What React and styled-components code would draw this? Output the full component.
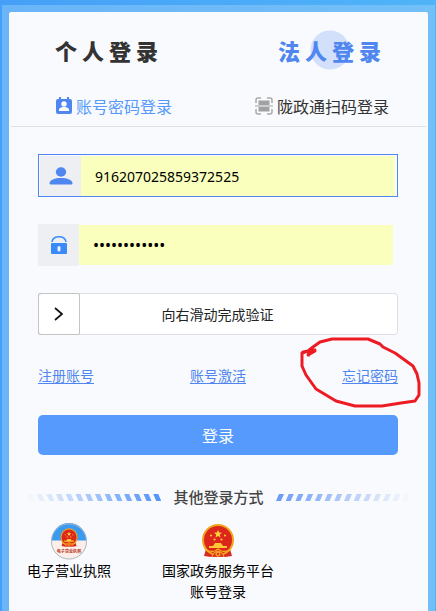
import React, {useState} from 'react';
import styled, {createGlobalStyle} from 'styled-components';

const STRIPES = [0, 1, 2, 3, 4, 5, 6, 7, 8, 9, 10, 11, 12, 13];

const ContactIcon = () => (
    <svg width="16" height="18" viewBox="0 0 16 18" aria-hidden="true">
        <path d="M2 2h1V0h2v2h6V0h2v2h1q2 0 2 2v11q0 2-2 2H2q-2 0-2-2V4q0-2 2-2z" fill="#4f86ef"/>
        <circle cx="8" cy="7" r="2.7" fill="#fff"/>
        <path d="M3 14v-1q0-3 5-3t5 3v1z" fill="#fff"/>
    </svg>
)

const ScanIcon = () => (
    <svg width="18" height="18" viewBox="0 0 18 18" aria-hidden="true">
        <path d="M1 6V3q0-2 2-2h3M12 1h3q2 0 2 2v3M1 12v3q0 2 2 2h3M12 17h3q2 0 2-2v-3" fill="none" stroke="#aaa" strokeWidth="1.5"/>
        <path d="M3.500 3.500h11v4.500h-11zM3.500 10h11v4.500h-11zM0 8.500h18v1H0z" fill="#a2a2a2"/>
    </svg>
)

const PersonIcon = () => (
    <svg width="24" height="18" viewBox="0 0 24 18" aria-hidden="true">
        <ellipse cx="12" cy="5" rx="5.2" ry="4.7" fill="#4f86ef"/>
        <path d="M.5 16c.5-3 5-5 11.500-5s11 2 11.500 5q.2 1.500-1.500 1.500H2Q.3 17.500.5 16z" fill="#4f86ef"/>
    </svg>
)

const LockIcon = () => (
    <svg width="18" height="18" viewBox="0 0 18 18" aria-hidden="true">
        <path d="M2 6C3-1 15-1 16 6" fill="none" stroke="#3f8cf8" strokeWidth="1.600"/>
        <rect x="1" y="7" width="16" height="11" rx="1" fill="#3a89f8"/>
        <rect x="7.500" y="10" width="3" height="5.500" rx="1.500" fill="#eef3fd"/>
    </svg>
)

const EmblemShapes = () => (
    <g>
        <path d="M5 25l-2 7 7 1 7-2 7 2 7-1-2-7z" fill="#d72a20"/>
        <circle cx="17" cy="16" r="16" fill="#f2a51c"/>
        <circle cx="17" cy="16" r="14" fill="#dc261c"/>
        <path d="M17 6l1.100 2.600 2.900.2-2.200 1.800.7 2.800-2.500-1.500-2.500 1.500.7-2.800L13 8.800l2.900-.2z" fill="#ffd33c"/>
        <g fill="#ffc832">
            <circle cx="10" cy="11.500" r="1.100"/>
            <circle cx="24" cy="11.500" r="1.100"/>
            <circle cx="13.500" cy="15.500" r="1.100"/>
            <circle cx="20.500" cy="15.500" r="1.100"/>
            <path d="M12 22l2-3h6l2 3h4v2H8v-2z"/>
        </g>
        <path d="M4 26q6 2 10 1l3-2 3 2q4 1 10-1" fill="none" stroke="#f5b321" strokeWidth="1.200"/>
        <path d="M11 33l1.500-4 4.500-2 4.500 2 1.500 4" fill="#e03a22" stroke="#f3a921"/>
        <circle cx="17" cy="30" r="2" fill="none" stroke="#ffc832"/>
    </g>
)

const NationIcon = () => (
    <svg width="34" height="37" viewBox="0 -1 34 37" aria-hidden="true">
        <EmblemShapes/>
    </svg>
)

const LicenceIcon = () => (
    <svg width="38" height="37" viewBox="0 0 38 38" aria-hidden="true">
        <circle cx="19" cy="19" r="18" fill="#fdeee9"/>
        <path d="M1 18a18 18 0 0 1 36 0z" fill="#3a9af0"/>
        <circle cx="19" cy="19" r="18" fill="none" stroke="#a9b4c0"/>
        <g transform="translate(9.700 5.500) scale(.55 .57)"><EmblemShapes/></g>
        <text x="19" y="31" textAnchor="middle" fontSize="4.200" fontWeight="700" fill="#b5402c">电子营业执照</text>
    </svg>
)

const Stripes = ({right}) => (
    <StripeBox viewBox="0 0 135 7" aria-hidden="true">
        {STRIPES.map((i) => {
            const x = i * 9.75;
            return right
                ? <path key={i} d={`M${x + 3} 0h5l-3 7h-5z`} fill="#6f9df5" opacity={1 - i * 0.074}/>
                : <path key={i} d={`M${x} 0h5l3 7h-5z`} fill="#5595f8" opacity={0.04 + i * 0.074}/>
        })}
    </StripeBox>
)

const App = () => {
    const [account, setAccount] = useState('916207025859372525');
    const [password, setPassword] = useState('abcdefghijkl');

    return (
        <>
            <GlobalStyle/>
            <Frame>
                <Card>
                    <RoleTabs>
                        <RoleTab type="button">个人登录</RoleTab>
                        <RoleTab type="button" $active>法人登录</RoleTab>
                    </RoleTabs>
                    <MethodTabs>
                        <MethodTab type="button" $active><ContactIcon/>账号密码登录</MethodTab>
                        <MethodTab type="button"><ScanIcon/>陇政通扫码登录</MethodTab>
                    </MethodTabs>
                    <Form onSubmit={(e) => e.preventDefault()}>
                        <Field $focused>
                            <FieldIcon htmlFor="account" aria-label="账号"><PersonIcon/></FieldIcon>
                            <FieldInput
                                id="account"
                                value={account}
                                onChange={(e) => setAccount(e.target.value)}
                            />
                        </Field>
                        <Field>
                            <FieldIcon htmlFor="password" aria-label="密码"><LockIcon/></FieldIcon>
                            <FieldInput
                                id="password"
                                type="password"
                                value={password}
                                onChange={(e) => setPassword(e.target.value)}
                            />
                        </Field>
                        <Slider>
                            <SliderHandle type="button" aria-label="滑动">
                                <svg width="10" height="14" viewBox="0 0 10 14">
                                    <path d="M1 1l7 6-7 6" fill="none" stroke="#111" strokeWidth="1.700"/>
                                </svg>
                            </SliderHandle>
                            <SliderText>向右滑动完成验证</SliderText>
                        </Slider>
                        <Links>
                            <Link href="#register">注册账号</Link>
                            <Link href="#activate">账号激活</Link>
                            <Marked>
                                <Link href="#forgot">忘记密码</Link>
                                <Mark viewBox="0 0 122 72" aria-hidden="true">
                                    <path d="M8 20l7-4M3 17l5-1 5-4 7-5 12-3h36l12 5 3 3 12 6 18 13 4 8 2 9v12l-4 6-14 2-19 3H55l-19-5-20-12-10-14-4-9V18l6-2M15 15l-7 1 1 4"/>
                                </Mark>
                            </Marked>
                        </Links>
                        <Submit type="submit">登录</Submit>
                    </Form>
                    <Other>
                        <Stripes/>
                        <OtherTitle>其他登录方式</OtherTitle>
                        <Stripes right/>
                    </Other>
                    <Providers>
                        <Provider href="#licence"><LicenceIcon/>电子营业执照</Provider>
                        <Provider href="#nation"><NationIcon/>国家政务服务平台<br/>账号登录</Provider>
                    </Providers>
                </Card>
            </Frame>
        </>
    )
}

const GlobalStyle = createGlobalStyle`
  * {
    box-sizing: border-box;
  }
  body {
    margin: 0;
    background: linear-gradient(90deg, #459ff8, #50b4f8);
    font-family: "Noto Sans", "Noto Sans CJK SC", sans-serif;
    font-size: 14px;
  }
  button, input {
    margin: 0;
    padding: 0;
    border: none;
    background: none;
    font: inherit;
  }
`;
const Frame = styled.div`
  display: flex;
  min-height: 100vh;
  padding: 7px 7px 0;
  border: solid transparent;
  border-width: 5px 1px 0 2px;
  background: linear-gradient(90deg, #6ab4f8, #73c0f8) padding-box;
`;
const Card = styled.main`
  flex: 1;
  min-width: 0;
  padding: 0 2px 8px;
  border-radius: 2px 2px 0 0;
  background: #f9fafd;
`;
const RoleTabs = styled.div`
  display: flex;
  justify-content: space-between;
  height: 76px;
  padding: 0 40px 0 44px;
`;
const RoleTab = styled.button`
  font-family: "Noto Sans CJK SC", sans-serif;
  font-size: 22px;
  font-weight: 900;
  letter-spacing: 5px;
  color: ${(p) => (p.$active ? '#4f86ef' : '#333')};
  background: ${(p) => (p.$active ? 'radial-gradient(circle at 52px 38px, #d3e0fb 19px, transparent 20px)' : 'none')};
`;
const MethodTabs = styled.div`
  display: flex;
  justify-content: space-between;
  height: 39px;
  padding: 0 37px 2px 45px;
  border-bottom: 1px solid #dddfe4;
`;
const MethodTab = styled.button`
  display: flex;
  align-items: center;
  gap: 4px;
  font-size: 16px;
  color: ${(p) => (p.$active ? '#5499fb' : '#333')};
`;
const Form = styled.form`
  padding: 27px 28px 0 27px;
`;
const Field = styled.div`
  display: flex;
  height: ${(p) => (p.$focused ? 43 : 42)}px;
  margin-bottom: 27px;
  padding: ${(p) => (p.$focused ? '1px 2px 0 1px' : '0 5px 0 0')};
  border: ${(p) => (p.$focused ? '1px solid #4f86ef' : 'none')};
`;
const FieldIcon = styled.label`
  display: flex;
  flex: none;
  align-items: center;
  justify-content: center;
  width: 41px;
  background: #eeeff2;
`;
const FieldInput = styled.input`
  flex: 1;
  min-width: 0;
  height: 40px;
  align-self: center;
  padding: 0 14px;
  background: #faffbd;
  color: #000;
  outline: none;

  &[type="password"] {
    font-size: 16px;
  }
`;
const Slider = styled.div`
  display: flex;
  height: 42px;
  border: 1px solid #dddfe2;
  border-radius: 4px;
  background: #fff;
`;
const SliderHandle = styled.button`
  display: flex;
  align-items: center;
  justify-content: center;
  width: 42px;
  margin: -1px 0 -1px -1px;
  border: 1px solid #c4c4c6;
  border-radius: 2px;
`;
const SliderText = styled.span`
  flex: 1;
  padding-right: 42px;
  line-height: 42px;
  text-align: center;
  color: #222;
`;
const Links = styled.div`
  display: flex;
  justify-content: space-between;
  padding: 30px 0 28px;
  line-height: 22px;
`;
const Link = styled.a`
  color: #4f86ef;
  text-decoration: underline;
  text-underline-offset: 2px;
`;
const Marked = styled.span`
  position: relative;
`;
const Mark = styled.svg`
  position: absolute;
  top: -30px;
  right: -24px;
  width: 122px;
  height: 72px;
  overflow: visible;
  fill: none;
  stroke: #ed1c24;
  stroke-width: 3;
  stroke-linejoin: round;
  stroke-linecap: round;
  pointer-events: none;
`;
const Submit = styled.button`
  width: 100%;
  height: 40px;
  border-radius: 5px;
  background: #559afc;
  color: #fff;
  font-size: 16px;
`;
const Other = styled.div`
  display: flex;
  align-items: center;
  justify-content: center;
  gap: 12px;
  padding: 31px 16px 0 16px;
`;
const StripeBox = styled.svg`
  flex: 0 1 135px;
  min-width: 0;
  height: 7px;
`;
const OtherTitle = styled.h2`
  flex: none;
  margin: 0;
  font-size: 15px;
  font-weight: 500;
  line-height: 22px;
  color: #444;
`;
const Providers = styled.div`
  display: flex;
  gap: 51px;
  padding: 15px 16px 0;
`;
const Provider = styled.a`
  display: flex;
  flex-direction: column;
  align-items: center;
  line-height: 21px;
  text-align: center;
  text-decoration: none;
  color: #000;
`;
export default App;
